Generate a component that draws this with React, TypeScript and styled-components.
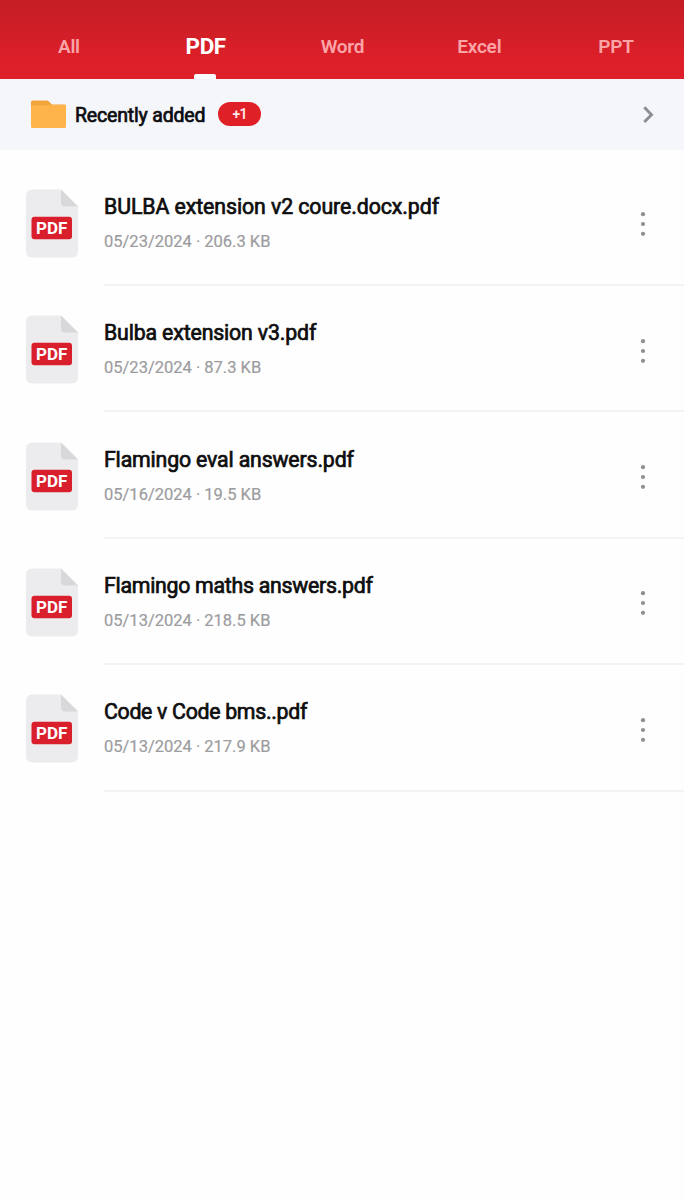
import React from "react";
import styled, { createGlobalStyle } from "styled-components";

const GlobalStyle = createGlobalStyle`
  * { box-sizing: border-box; }
  body { margin: 0; background: #fefefe; font-family: Roboto, sans-serif; }
`;

const Screen = styled.div`
  width: 100%;
  min-height: 1200px;
  display: flex;
  flex-direction: column;
  background: #fefefe;
`;

const TabBar = styled.nav`
  display: grid;
  grid-template-columns: repeat(5, 1fr);
  height: 79px;
  padding-top: 14px;
  background: linear-gradient(#c51d24 0%, #cb1e26 25%, #dc1f29 72%, #df202a 100%);
`;

const Tab = styled.button<{ $active?: boolean }>`
  position: relative;
  display: flex;
  align-items: center;
  justify-content: center;
  border: 0;
  padding: 0 0 ${(p) => (p.$active ? 2 : 0)}px 1px;
  background: none;
  font-family: inherit;
  font-weight: ${(p) => (p.$active ? 700 : 600)};
  font-size: ${(p) => (p.$active ? 22.5 : 19)}px;
  letter-spacing: ${(p) => (p.$active ? -0.4 : -0.2)}px;
  color: ${(p) => (p.$active ? "#fff" : "#fba4a8")};
`;

const Indicator = styled.span`
  position: absolute;
  bottom: 0;
  left: 57px;
  width: 22px;
  height: 5px;
  border-radius: 2px 2px 0 0;
  background: #fafbff;
`;

const Recent = styled.section`
  display: flex;
  align-items: center;
  height: 71px;
  padding: 0 29px 0 31px;
  background: #f5f6fa;
`;

const RecentLabel = styled.span`
  margin-left: 9px;
  padding-top: 1px;
  font-size: 19.5px;
  font-weight: 400;
  letter-spacing: -0.18px;
  -webkit-text-stroke: 0.7px #0c0d10;
  color: #0c0d10;
  white-space: nowrap;
`;

const Badge = styled.span`
  display: flex;
  align-items: center;
  justify-content: center;
  width: 43px;
  height: 24px;
  margin: 0 auto 1px 13px;
  border-radius: 12px;
  background: #df2027;
  color: #ffe9e9;
  font-size: 14px;
  font-weight: 600;
  letter-spacing: -0.5px;
`;

const FileList = styled.main`
  display: flex;
  flex-direction: column;
  padding: 9.6px 0 0 25px;
`;

const FileRow = styled.article`
  display: flex;
  height: 126.4px;
`;

const IconCell = styled.div`
  width: 79px;
  padding-top: 29.2px;
`;

const FileBody = styled.div`
  flex: 1;
  display: flex;
  justify-content: space-between;
  border-bottom: 2px solid #f3f3f3;
`;

const FileText = styled.div`
  display: flex;
  flex-direction: column;
  padding-top: 33.2px;
`;

const FileName = styled.span<{ $tracking: number }>`
  font-size: 21.3px;
  font-weight: 400;
  line-height: 28px;
  letter-spacing: ${(p) => p.$tracking}px;
  -webkit-text-stroke: 0.7px #0e0e0e;
  color: #0e0e0e;
  white-space: nowrap;
`;

const FileMeta = styled.span`
  margin-top: 10px;
  font-size: 16.5px;
  line-height: 22px;
  -webkit-text-stroke: 0.2px #9c9c9e;
  color: #9c9c9e;
  white-space: nowrap;
`;

const MoreButton = styled.button`
  align-self: flex-start;
  margin: 49.7px 38px 0 0;
  padding: 0;
  border: 0;
  background: none;
  line-height: 0;
`;

const FolderIcon = () => (
  <svg width="35" height="29" viewBox="0 0 35 29">
    <path d="M1.5 .5H16q1 0 1.700.7L21 4.500h12.500q1.500 0 1.500 1.500v10H0V2Q0 .5 1.500.5Z" fill="#f2a53a" />
    <path d="M0 5.500H18.500L20.500 5h13q1.500 0 1.500 1.500v20q0 1.500-1.500 1.500h-32Q0 28 0 26.500Z" fill="#ffb44b" />
  </svg>
);

const ChevronIcon = () => (
  <svg width="14" height="20" viewBox="0 0 14 20">
    <path d="M3.300 2.300 10.500 9.700l-7.200 7.400" fill="none" stroke="#8b8d90" strokeWidth="2.900" />
  </svg>
);

const PdfIcon = () => (
  <svg width="54" height="70" viewBox="0 0 54 70">
    <path d="M7.500.5H36L53 17.500V62q0 6.500-6.500 6.500h-39Q1 68.500 1 62V7Q1 .5 7.500.5Z" fill="#ececee" />
    <path d="M36 .5 53 17.500H40q-4 0-4-4Z" fill="#d8d8da" />
    <rect x="6.500" y="27.700" width="40.500" height="22.500" rx="3" fill="#d91f2c" />
    <text x="26.700" y="45" textAnchor="middle" fill="#fff" fontFamily="Roboto, sans-serif" fontSize="17" fontWeight="700">
      PDF
    </text>
  </svg>
);

const MoreIcon = () => (
  <svg width="6" height="30" viewBox="0 0 6 30">
    {[5.2, 15, 24.8].map((y) => (
      <circle key={y} cx="3" cy={y} r="2.100" fill="#8f8f91" />
    ))}
  </svg>
);

const tabs = ["All", "PDF", "Word", "Excel", "PPT"];

const files = [
  { name: "BULBA extension v2 coure.docx.pdf", meta: "05/23/2024 · 206.3 KB", tracking: -0.08 },
  { name: "Bulba extension v3.pdf", meta: "05/23/2024 · 87.3 KB", tracking: -0.15 },
  { name: "Flamingo eval answers.pdf", meta: "05/16/2024 · 19.5 KB", tracking: -0.16 },
  { name: "Flamingo maths answers.pdf", meta: "05/13/2024 · 218.5 KB", tracking: -0.27 },
  { name: "Code v Code bms..pdf", meta: "05/13/2024 · 217.9 KB", tracking: -0.3 },
];

export default function App() {
  return (
    <Screen>
      <GlobalStyle />
      <TabBar>
        {tabs.map((tab) => (
          <Tab key={tab} $active={tab === "PDF"}>
            {tab}
            {tab === "PDF" && <Indicator />}
          </Tab>
        ))}
      </TabBar>
      <Recent>
        <FolderIcon />
        <RecentLabel>Recently added</RecentLabel>
        <Badge>+1</Badge>
        <ChevronIcon />
      </Recent>
      <FileList>
        {files.map((file) => (
          <FileRow key={file.name}>
            <IconCell>
              <PdfIcon />
            </IconCell>
            <FileBody>
              <FileText>
                <FileName $tracking={file.tracking}>{file.name}</FileName>
                <FileMeta>{file.meta}</FileMeta>
              </FileText>
              <MoreButton aria-label="More options">
                <MoreIcon />
              </MoreButton>
            </FileBody>
          </FileRow>
        ))}
      </FileList>
    </Screen>
  );
}
